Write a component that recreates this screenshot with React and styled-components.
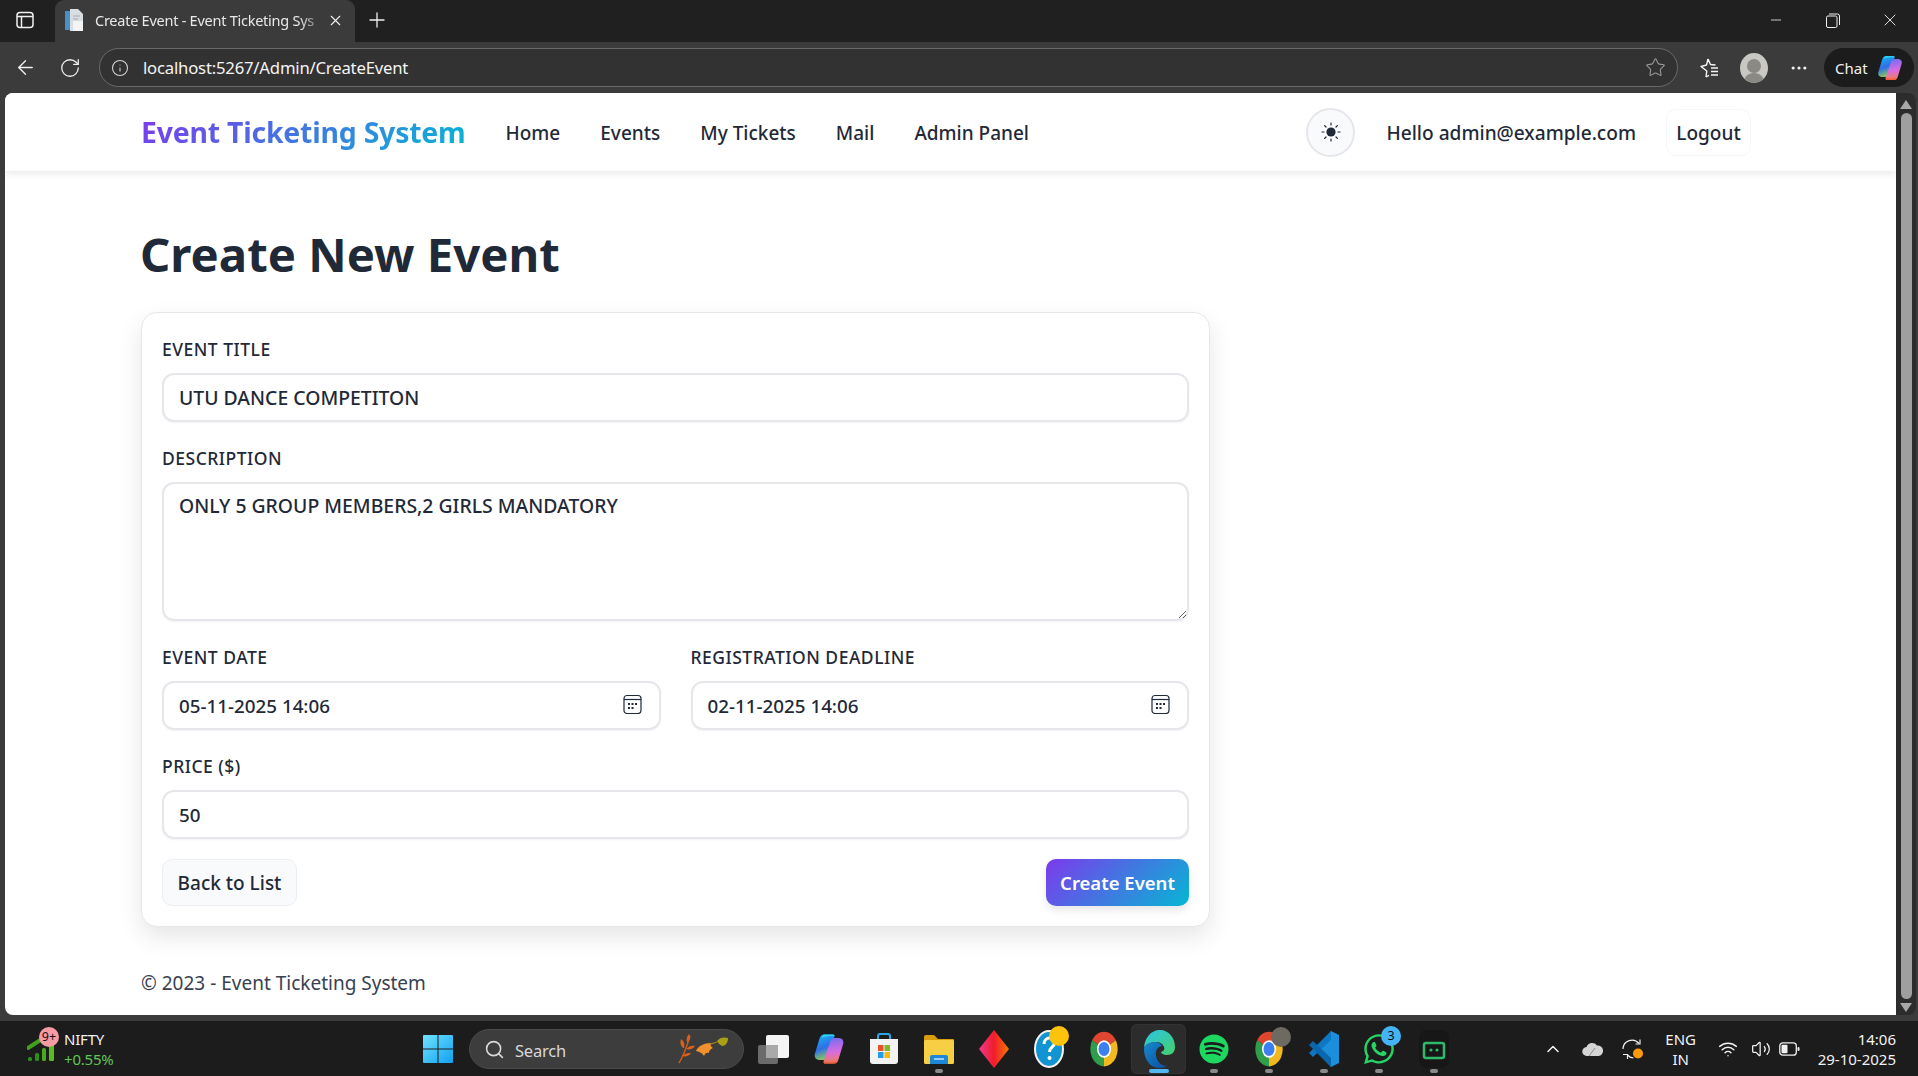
import React from "react";
import styled, { createGlobalStyle } from "styled-components";
import {
  ArrowLeft,
  RotateCw,
  Info,
  Star,
  X,
  Plus,
  Minus,
  MoreHorizontal,
  Search,
  ChevronUp,
  Wifi,
  Volume2,
} from "lucide-react";
import { FaSpotify, FaWhatsapp } from "react-icons/fa";

const GlobalStyle = createGlobalStyle`
  * { box-sizing: border-box; }
  html, body { margin: 0; padding: 0; height: 100%; overflow: hidden; }
  body { font-family: "Noto Sans", "Open Sans", sans-serif; background: #3b3b3b; }
`;

const Screen = styled.div`
  display: flex;
  flex-direction: column;
  width: 1918px;
  height: 1076px;
  overflow: hidden;
`;

/* browser chrome */
const TabStrip = styled.div`
  display: flex;
  align-items: flex-end;
  height: 42px;
  padding-left: 14px;
  background: #202020;
  color: #f0f0f0;
  flex-shrink: 0;
`;

const StripButton = styled.div`
  display: flex;
  align-items: center;
  justify-content: center;
  width: 22px;
  height: 42px;
  margin-right: 19px;
  padding-bottom: 2px;
`;

const Tab = styled.div`
  display: flex;
  align-items: center;
  width: 300px;
  height: 42px;
  padding: 0 11px 2px 9px;
  border-radius: 9px 9px 0 0;
  background: #3b3b3b;
`;

const TabTitle = styled.span`
  flex: 1;
  margin-left: 11px;
  overflow: hidden;
  font-size: 14.5px;
  white-space: nowrap;
  color: #e8e8e8;
  letter-spacing: -0.25px;
  -webkit-mask-image: linear-gradient(90deg, #000 88%, transparent);
  mask-image: linear-gradient(90deg, #000 88%, transparent);
`;

const NewTab = styled.div`
  display: flex;
  align-items: center;
  height: 42px;
  margin-left: 10px;
  padding-bottom: 2px;
`;

const WindowControls = styled.div`
  display: flex;
  align-items: center;
  height: 42px;
  margin-left: auto;
  padding-bottom: 2px;
`;

const WindowButton = styled.div`
  display: flex;
  align-items: center;
  justify-content: center;
  width: 57px;
  height: 40px;
`;

const Toolbar = styled.div`
  display: flex;
  align-items: center;
  height: 51px;
  padding: 0 4px 0 11px;
  background: #3b3b3b;
  color: #f0f0f0;
  flex-shrink: 0;
`;

const ToolButton = styled.div`
  display: flex;
  align-items: center;
  justify-content: center;
  width: ${(p) => p.$w || 45}px;
  flex-shrink: 0;
`;

const AddressBar = styled.div`
  display: flex;
  align-items: center;
  flex: 1;
  height: 39px;
  margin: 0 8px 0 -2px;
  padding: 0 11px;
  border: 1px solid #6a6a6a;
  border-radius: 20px;
  background: #323232;
`;

const Url = styled.span`
  flex: 1;
  margin-left: 14px;
  font-size: 16.7px;
  letter-spacing: -0.2px;
  color: #f4f4f4;
`;

const ChatPill = styled.div`
  display: flex;
  align-items: center;
  gap: 8px;
  width: 90px;
  height: 39px;
  margin-left: 3px;
  padding-left: 11px;
  border-radius: 20px;
  background: #1c1c1c;
  font-size: 15px;
  color: #f0f0f0;
`;

const Avatar = styled.div`
  position: relative;
  width: 28px;
  height: 30px;
  overflow: hidden;
  border-radius: 50%;
  background: #c9c7c2;
`;

const AvatarShape = styled.span`
  position: absolute;
  left: ${(p) => p.$x}px;
  top: ${(p) => p.$y}px;
  width: ${(p) => p.$s}px;
  height: ${(p) => p.$s}px;
  border-radius: 50%;
  background: #8b8985;
`;

/* viewport */
const Viewport = styled.div`
  display: flex;
  flex: 1;
  min-height: 0;
  padding-left: 5px;
`;

const Page = styled.div`
  display: flex;
  flex-direction: column;
  flex: 1;
  min-width: 0;
  overflow: hidden;
  border-radius: 8px 0 0 8px;
  background: #fff;
  color: #1f2937;
`;

const Scrollbar = styled.div`
  display: flex;
  flex-direction: column;
  align-items: center;
  width: 20px;
  margin-right: 2px;
  padding: 7px 0 3px;
  border-radius: 0 8px 8px 0;
  background: #2c2c2c;
`;

const ScrollThumb = styled.div`
  flex: 1;
  width: 11px;
  margin: 4px 0;
  border-radius: 6px;
  background: #9f9f9f;
`;

const ScrollArrow = styled.div`
  width: 0;
  height: 0;
  border-left: 6px solid transparent;
  border-right: 6px solid transparent;
  ${(p) => (p.$down ? "border-top: 9px solid #a8a8a8;" : "border-bottom: 9px solid #a8a8a8;")}
`;

const Navbar = styled.header`
  position: relative;
  display: flex;
  align-items: center;
  height: 78px;
  padding: 0 145px 0 136px;
  background: #fff;
  box-shadow: 0 2px 8px rgba(0, 0, 0, 0.1);
  flex-shrink: 0;
`;

const Brand = styled.a`
  margin-right: 40px;
  font-size: 28.4px;
  font-weight: 700;
  letter-spacing: -0.2px;
  white-space: nowrap;
  background: linear-gradient(135deg, #7c3aed, #06b6d4);
  -webkit-background-clip: text;
  background-clip: text;
  color: transparent;
`;

const NavLinks = styled.nav`
  display: flex;
  gap: 40px;
  padding-top: 2px;
`;

const NavLink = styled.a`
  font-size: 19px;
  font-weight: 500;
  color: #1f2937;
  white-space: nowrap;
`;

const NavRight = styled.div`
  display: flex;
  align-items: center;
  margin-left: auto;
`;

const ThemeButton = styled.button`
  display: flex;
  align-items: center;
  justify-content: center;
  width: 49px;
  height: 49px;
  margin-right: 31px;
  padding: 0;
  border: 2px solid #e5e7eb;
  border-radius: 50%;
  background: #f9fafb;
`;

const Hello = styled.span`
  padding-top: 2px;
  font-size: 19.1px;
  font-weight: 500;
  white-space: nowrap;
  margin-right: 30px;
`;

const LogoutButton = styled.button`
  width: 85px;
  height: 47px;
  padding: 2px 0 0;
  border: 1px solid #f6f6f8;
  border-radius: 10px;
  background: #fff;
  font: 500 19px "Noto Sans", sans-serif;
  color: #1f2937;
`;

const Main = styled.main`
  flex: 1;
  padding: 54px 0 0 136px;
`;

const Heading = styled.h1`
  margin: 0 0 29px -1px;
  font-size: 47.3px;
  line-height: 58px;
  font-weight: 700;
  color: #1f2937;
`;

const Card = styled.form`
  display: flex;
  flex-direction: column;
  gap: 25px;
  width: 1069px;
  padding: 25px 20px 20px;
  border: 1px solid #e5e7eb;
  border-radius: 16px;
  background: #fff;
  box-shadow: 0 10px 25px rgba(0, 0, 0, 0.1);
`;

const Group = styled.div`
  display: flex;
  flex-direction: column;
`;

const Label = styled.label`
  margin-bottom: 13px;
  font-size: 17.5px;
  line-height: 22px;
  font-weight: 500;
  letter-spacing: 0.5px;
  text-transform: uppercase;
  color: #1f2937;
`;

const InputWrap = styled.div`
  position: relative;
`;

const Input = styled.input`
  display: block;
  width: 100%;
  height: 49px;
  padding: 0 15px;
  border: 2px solid #e5e7eb;
  border-radius: 12px;
  outline: none;
  background: #fff;
  box-shadow: 0 1px 2px rgba(0, 0, 0, 0.05);
  font: 500 ${(p) => (p.$numeric ? 18.8 : 19.4)}px "Noto Sans", sans-serif;
  color: #1f2937;
`;

const TextArea = styled.textarea`
  display: block;
  width: 100%;
  height: 139px;
  padding: 9px 15px;
  border: 2px solid #e5e7eb;
  border-radius: 12px;
  outline: none;
  background: #fff;
  box-shadow: 0 1px 2px rgba(0, 0, 0, 0.05);
  font: 500 19.4px/26px "Noto Sans", sans-serif;
  color: #1f2937;
`;

const CalendarSlot = styled.span`
  position: absolute;
  top: 13px;
  right: 19px;
  display: flex;
  color: #1f2937;
`;

const DateRow = styled.div`
  display: grid;
  grid-template-columns: 1fr 1fr;
  gap: 30px;
`;

const Actions = styled.div`
  display: flex;
  justify-content: space-between;
  margin-top: -5px;
`;

const BackButton = styled.button`
  width: 135px;
  height: 47px;
  padding: 0;
  border: 1px solid #eceef1;
  border-radius: 10px;
  background: #f9fafb;
  font: 500 19px "Noto Sans", sans-serif;
  color: #1f2937;
`;

const SubmitButton = styled.button`
  width: 143px;
  height: 47px;
  padding: 0;
  border: none;
  border-radius: 10px;
  background: linear-gradient(135deg, #7c3aed, #06b6d4);
  box-shadow: 0 4px 8px rgba(0, 0, 0, 0.1);
  font: 600 18.5px "Noto Sans", sans-serif;
  color: #fff;
`;

const Footer = styled.footer`
  margin-top: 43px;
  font-size: 19px;
  line-height: 26px;
  color: #374151;
`;

/* taskbar */
const Taskbar = styled.div`
  display: flex;
  align-items: center;
  height: 55px;
  margin-top: 6px;
  background: #1c1c1c;
  color: #f2f2f2;
  flex-shrink: 0;
`;

const Weather = styled.div`
  position: relative;
  display: flex;
  align-items: center;
  gap: 9px;
  width: 423px;
  padding-left: 27px;
  flex-shrink: 0;
`;

const Badge = styled.span`
  position: absolute;
  display: flex;
  align-items: center;
  justify-content: center;
  left: ${(p) => p.$x}px;
  top: ${(p) => p.$y}px;
  width: ${(p) => p.$s || 20}px;
  height: ${(p) => p.$s || 20}px;
  border-radius: 50%;
  background: ${(p) => p.$bg};
  color: ${(p) => p.$fg || "#111"};
  font-size: 12.5px;
`;

const Ticker = styled.div`
  display: flex;
  flex-direction: column;
  font-size: 15px;
  line-height: 20px;
  letter-spacing: -0.2px;
`;

const TickerValue = styled.span`
  color: #62c554;
`;

const StartButton = styled.div`
  display: flex;
  width: 46px;
  flex-shrink: 0;
`;

const SearchBox = styled.div`
  display: flex;
  align-items: center;
  width: 275px;
  height: 40px;
  padding: 1px 6px 0 14px;
  border: 1px solid #4a4a4a;
  border-radius: 20px;
  background: #3d3d3d;
  flex-shrink: 0;
  color: #d8d8d8;
`;

const SearchText = styled.span`
  flex: 1;
  margin-left: 10px;
  padding-top: 2px;
  font-size: 16.5px;
  letter-spacing: -0.2px;
`;

const TaskIcons = styled.div`
  display: flex;
  margin-left: 2px;
  flex-shrink: 0;
`;

const TaskItem = styled.div`
  position: relative;
  display: flex;
  align-items: center;
  justify-content: center;
  width: 55px;
  height: 50px;
  border-radius: 6px;
  ${(p) => p.$active && "background: #2c2c2c; box-shadow: inset 0 0 0 1px #333;"}
  &::after {
    content: "";
    display: ${(p) => (p.$dot || p.$active ? "block" : "none")};
    position: absolute;
    bottom: 1px;
    left: 50%;
    width: ${(p) => (p.$active ? 20 : 8)}px;
    height: 4px;
    margin-left: ${(p) => (p.$active ? -10 : -4)}px;
    border-radius: 2px;
    background: ${(p) => (p.$active ? "#4fb8f0" : "#8a8a8a")};
  }
`;

const Tray = styled.div`
  display: flex;
  align-items: center;
  margin-left: auto;
  padding-right: 22px;
`;

const TraySlot = styled.div`
  display: flex;
  align-items: center;
  justify-content: center;
  width: ${(p) => p.$w}px;
  height: 40px;
`;

const LangText = styled.div`
  font-size: 15px;
  line-height: 20px;
  text-align: center;
`;

const ClockText = styled.div`
  margin-left: 13px;
  font-size: 15px;
  line-height: 20px;
  text-align: right;
  white-space: nowrap;
`;

/* drawn icons */
const TabsIcon = () => (
  <svg width="18" height="18" viewBox="0 0 18 18" fill="none" stroke="#f0f0f0" strokeWidth="1.5">
    <rect x="1" y="1.5" width="16" height="15" rx="3" />
    <path d="M1 5.5h16M5.5 5.5v11" />
  </svg>
);

const PageIcon = () => (
  <svg width="20" height="24" viewBox="0 0 20 24">
    <path d="M1 3h6v19H1z" fill="#4b8fc9" />
    <path d="M6 1h8l5 5v17H6z" fill="#d8dde2" />
    <path d="M9 13h10v10H9z" fill="#f2f4f6" />
    <path d="M9 8h7M9 11h5" stroke="#a4abb3" />
  </svg>
);

const RestoreIcon = () => (
  <svg width="14" height="15" viewBox="0 0 14 15" fill="none" stroke="#f0f0f0" strokeWidth="1">
    <rect x="0.5" y="3" width="10.5" height="11.5" rx="1.5" />
    <path d="M3 1h8.5A2 2 0 0 1 13.5 3v9" />
  </svg>
);

const FavoritesIcon = () => (
  <svg width="22" height="22" viewBox="0 0 22 22" fill="none" stroke="#f4f4f4" strokeWidth="1.4" strokeLinejoin="round">
    <path d="M10 2l2.5 5.5 5 .5M8 20l.8-6L3 9.5l5.5-1.5L10 2M8 20l3-1.6" />
    <path d="M13 11h7M13 14.5h7M13 18h7" />
  </svg>
);

const CopilotIcon = ({ size = 28, id = "cp" }) => (
  <svg width={size} height={size} viewBox="0 0 28 28">
    <defs>
      <linearGradient id={`${id}A`} x1="0.2" y1="0" x2="0.5" y2="1">
        <stop offset="0" stopColor="#19b4f5" />
        <stop offset="0.55" stopColor="#2f6fe8" />
        <stop offset="1" stopColor="#8fd14f" />
      </linearGradient>
      <linearGradient id={`${id}B`} x1="0.5" y1="0" x2="0.6" y2="1">
        <stop offset="0" stopColor="#7c6cf2" />
        <stop offset="0.55" stopColor="#d96ce0" />
        <stop offset="1" stopColor="#f0804f" />
      </linearGradient>
    </defs>
    <path d="M10 2h7c1.200 0 1.800 1 1.400 2.200L13 20c-.7 2-2 3-4 3H6c-3 0-4.400-2.400-3.600-5L6 6c.7-2.500 2-4 4-4z" fill={`url(#${id}A)`} />
    <path d="M18 26h-7c-1.200 0-1.800-1-1.400-2.200L15 8c.7-2 2-3 4-3h3c3 0 4.400 2.400 3.600 5L22 22c-.7 2.500-2 4-4 4z" fill={`url(#${id}B)`} />
    <path d="M9.800 24c-.3 1 .2 2 1.200 2h7c1.500 0 2.700-.8 3.400-2.200-3 .8-7 .8-11.600.2z" fill="#f2603f" />
    <path d="M10 2h7.500c.8 0 1.200.6 1 1.400C15 3 12 3.500 8 4.800 8.500 3 9 2 10 2z" fill="#2bd0f2" />
  </svg>
);

const SunIcon = () => (
  <svg width="20" height="20" viewBox="0 0 20 20" fill="#1f2937" stroke="#1f2937" strokeWidth="1.2" strokeLinecap="round">
    <circle cx="10" cy="10" r="4.600" stroke="none" />
    <path d="M10 1v2M10 17v2M1 10h2M17 10h2M3.600 3.600l1.400 1.400M15 15l1.400 1.400M3.600 16.400L5 15M15 5l1.400-1.400" />
  </svg>
);

const CalendarIcon = () => (
  <svg width="19" height="20" viewBox="0 0 19 20" fill="none" stroke="currentColor" strokeWidth="1.200">
    <rect x="1" y="1.500" width="17" height="18" rx="3" />
    <path d="M1 5.500h17" />
    <g fill="currentColor" stroke="none">
      <rect x="5" y="9" width="2" height="2" />
      <rect x="8.500" y="9" width="2" height="2" />
      <rect x="12" y="9" width="2" height="2" />
      <rect x="5" y="13" width="2" height="2" />
      <rect x="8.500" y="13" width="2" height="2" />
    </g>
  </svg>
);

const NiftyIcon = () => (
  <svg width="28" height="27" viewBox="0 0 28 27">
    <path d="M1 13L15 4" stroke="#3da31f" strokeWidth="4" strokeLinecap="round" />
    <rect x="1" y="22" width="4" height="4" rx="1.500" fill="#2a8f14" />
    <rect x="8" y="18" width="4" height="8" rx="1.500" fill="#2a8f14" />
    <rect x="15" y="13" width="4" height="13" rx="1.500" fill="#49a81f" />
    <rect x="22" y="8" width="5" height="18" rx="1.500" fill="#59bd22" />
  </svg>
);

const WindowsLogo = () => (
  <svg width="30" height="30" viewBox="0 0 30 30">
    <defs>
      <linearGradient id="winA" x1="0" y1="0" x2="1" y2="1">
        <stop offset="0" stopColor="#6fe3ff" />
        <stop offset="1" stopColor="#12a0f0" />
      </linearGradient>
    </defs>
    <path d="M1 1h13.500v13.500H0V2a1 1 0 0 1 1-1zM15.500 1H29a1 1 0 0 1 1 1v12.500H15.500zM0 15.500h14.500V29H1a1 1 0 0 1-1-1zM15.500 15.500H30V28a1 1 0 0 1-1 1H15.500z" fill="url(#winA)" />
  </svg>
);

const LeavesIcon = () => (
  <svg width="60" height="30" viewBox="0 0 60 30">
    <path d="M2 29C7 21 10 12 13 2" stroke="#c65a1c" strokeWidth="1.500" fill="none" />
    <path d="M6 14c-3-3-3-6-2-9 3 2 4 5 3 9zM10 8c-1-3 0-6 2-8 2 3 1 6-1 8zM9 15c3-3 6-4 9-3-2 3-5 4-9 3zM5 22c3-3 6-3 9-3-2 3-5 4-9 3z" fill="#dd5f1a" />
    <path d="M19 17c2-5 8-8 15-8-1 2 0 4 2 5-3 1-4 3-4 5-2-1-4 0-5 3-2-3-4-4-8-5z" fill="#f0902e" />
    <path d="M34 10l6-2" stroke="#a88a10" strokeWidth="1.200" />
    <path d="M40 7c3-4 7-4 11-3 0 4-2 8-6 8-2-1-4-3-5-5z" fill="#a9a016" />
  </svg>
);

const SquaresIcon = () => (
  <svg width="32" height="30" viewBox="0 0 32 30">
    <rect x="0" y="11" width="20" height="19" rx="2" fill="#6b6b6b" />
    <rect x="8" y="1" width="23" height="23" rx="2" fill="#f4f4f4" />
    <rect x="8" y="11" width="12" height="13" fill="#a9a9a9" />
  </svg>
);

const StoreIcon = () => (
  <svg width="30" height="32" viewBox="0 0 30 32">
    <path d="M9 7V3a2 2 0 0 1 2-2h8a2 2 0 0 1 2 2v4" fill="none" stroke="#29a8e8" strokeWidth="2" />
    <path d="M1 6h28v22a3 3 0 0 1-3 3H4a3 3 0 0 1-3-3z" fill="#f3f3f3" />
    <rect x="9" y="12" width="5.500" height="6" fill="#e8502a" />
    <rect x="15.500" y="12" width="5.500" height="6" fill="#7db928" />
    <rect x="9" y="19" width="5.500" height="6" fill="#1e9ee8" />
    <rect x="15.500" y="19" width="5.500" height="6" fill="#f6b911" />
  </svg>
);

const FolderIcon = () => (
  <svg width="32" height="30" viewBox="0 0 32 30">
    <path d="M1 3a2 2 0 0 1 2-2h8l4 4h15a1 1 0 0 1 1 1v5H1z" fill="#d99e0d" />
    <rect x="1" y="6" width="30" height="24" rx="1.500" fill="#f7cf45" />
    <path d="M7 30v-7a2 2 0 0 1 2-2h14a2 2 0 0 1 2 2v7z" fill="#1e87d8" />
    <rect x="11" y="24" width="10" height="2" fill="#8fd0f4" />
  </svg>
);

const DiamondIcon = () => (
  <svg width="30" height="38" viewBox="0 0 30 38">
    <defs>
      <linearGradient id="dmA" x1="0" y1="0" x2="1" y2="0">
        <stop offset="0" stopColor="#f0398c" />
        <stop offset="0.5" stopColor="#f01c2c" />
        <stop offset="1" stopColor="#f77a00" />
      </linearGradient>
    </defs>
    <path d="M15 0l15 19-15 19L0 19z" fill="url(#dmA)" />
  </svg>
);

const HelpIcon = () => (
  <svg width="30" height="38" viewBox="0 0 30 38">
    <ellipse cx="15" cy="19" rx="14" ry="18" fill="#1394d2" stroke="#f4f4f4" strokeWidth="2" />
    <path d="M10 14c0-4 3-6 5.500-6 3 0 5 2 5 5 0 4-5 4-5 9" fill="none" stroke="#fff" strokeWidth="3" />
    <circle cx="15.500" cy="28" r="2" fill="#fff" />
  </svg>
);

const ChromeIcon = ({ w = 30, h = 38 }) => (
  <svg width={w} height={h} viewBox="0 0 24 24" preserveAspectRatio="none">
    <path d="M12 12L2.500 6.500A11 11 0 0 1 21.500 6.500z" fill="#e0452f" />
    <path d="M12 12L21.500 6.500A11 11 0 0 1 12 23z" fill="#f2b91e" />
    <path d="M12 12L12 23A11 11 0 0 1 2.500 6.500z" fill="#2f9e4a" />
    <circle cx="12" cy="12" r="5.600" fill="#fff" />
    <circle cx="12" cy="12" r="4.400" fill="#3c7ff0" />
  </svg>
);

const EdgeIcon = () => (
  <svg width="32" height="38" viewBox="0 0 32 38">
    <defs>
      <linearGradient id="edA" x1="0" y1="0" x2="1" y2="1">
        <stop offset="0" stopColor="#2cc4e8" />
        <stop offset="1" stopColor="#45d06a" />
      </linearGradient>
      <linearGradient id="edB" x1="0" y1="0" x2="1" y2="1">
        <stop offset="0" stopColor="#1789d0" />
        <stop offset="1" stopColor="#0c4f9c" />
      </linearGradient>
    </defs>
    <path d="M1 19C1 8 8 0 17 0c9 0 15 8 15 17 0 5-3 8-8 8-4 0-6-2-6-3 3-1 4-3 3-5-1-3-4-5-8-5-6 0-12 3-12 7z" fill="url(#edA)" />
    <path d="M1 19c0-4 6-7 11-7 4 0 6 2 7 4-5 1-7 5-6 10 1 5 5 10 11 10-2 1-5 2-8 2C7 38 1 29 1 19z" fill="url(#edB)" />
  </svg>
);

const VsCodeIcon = () => (
  <svg width="30" height="36" viewBox="0 0 30 36">
    <path d="M22 0l8 4v28l-8 4-13-14.500z" fill="#1b8fdc" />
    <path d="M22 0L0 22l4 4L22 9z" fill="#0f78c4" />
    <path d="M22 36L0 14l4-4 18 17z" fill="#0a67ae" />
  </svg>
);

const RemoteIcon = () => (
  <svg width="30" height="38" viewBox="0 0 30 38">
    <rect x="0" y="0" width="30" height="38" rx="8" fill="#171717" />
    <rect x="5" y="13" width="20" height="15" rx="2" fill="none" stroke="#2dbb6b" strokeWidth="2.500" />
    <circle cx="12" cy="20" r="1.600" fill="#2dbb6b" />
    <circle cx="18" cy="20" r="1.600" fill="#2dbb6b" />
  </svg>
);

const CloudIcon = () => (
  <svg width="21" height="14" viewBox="0 0 21 14">
    <path d="M5 14a4.500 4.500 0 0 1-.5-9A6 6 0 0 1 15 3.500 5 5 0 0 1 16.500 14z" fill="#d4d4d4" />
    <path d="M7 14l6-8" stroke="#8c8c8c" strokeWidth="1" />
  </svg>
);

const SyncIcon = () => (
  <svg width="22" height="22" viewBox="0 0 22 22" fill="none" stroke="#f0f0f0" strokeWidth="1.200">
    <path d="M1 11a9 9 0 0 1 16-5.500" />
    <path d="M18 1.500v4.500h-4.500" />
    <path d="M1 16.500h4.500V21" />
    <path d="M5.500 17a9 9 0 0 0 6 3" />
    <circle cx="16" cy="15.500" r="5" fill="#f89a0c" stroke="none" />
  </svg>
);

const BatteryIcon = () => (
  <svg width="21" height="14" viewBox="0 0 21 14">
    <rect x="0.800" y="0.800" width="16.500" height="12.400" rx="3" fill="none" stroke="#f0f0f0" strokeWidth="1.300" />
    <rect x="2.500" y="2.800" width="6" height="8.400" rx="1" fill="#f0f0f0" />
    <rect x="18.500" y="5" width="2" height="4" rx="1" fill="#f0f0f0" />
  </svg>
);

const taskIcons = [
  { id: "squares", icon: <SquaresIcon /> },
  { id: "copilot", icon: <CopilotIcon size={34} id="cpTask" /> },
  { id: "store", icon: <StoreIcon /> },
  { id: "folder", icon: <FolderIcon />, dot: true },
  { id: "diamond", icon: <DiamondIcon /> },
  { id: "help", icon: <HelpIcon />, badge: { x: 28, y: 2, s: 20, bg: "#fdc30a" } },
  { id: "chrome", icon: <ChromeIcon /> },
  { id: "edge", icon: <EdgeIcon />, active: true },
  { id: "spotify", icon: <FaSpotify size={30} color="#1ed760" />, dot: true },
  { id: "chrome2", icon: <ChromeIcon />, dot: true, badge: { x: 30, y: 3, s: 20, bg: "#6d6a62" } },
  { id: "vscode", icon: <VsCodeIcon />, dot: true },
  { id: "whatsapp", icon: <FaWhatsapp size={34} color="#25d366" />, dot: true, badge: { x: 30, y: 2, s: 20, bg: "#45b4f5", label: "3" } },
  { id: "remote", icon: <RemoteIcon />, dot: true },
];

const App = () => {
  return (
    <Screen>
      <GlobalStyle />
      <TabStrip>
        <StripButton>
          <TabsIcon />
        </StripButton>
        <Tab>
          <PageIcon />
          <TabTitle>Create Event - Event Ticketing Sys</TabTitle>
          <X size={17} strokeWidth={1.6} />
        </Tab>
        <NewTab>
          <Plus size={24} strokeWidth={1.3} />
        </NewTab>
        <WindowControls>
          <WindowButton>
            <Minus size={16} strokeWidth={1.2} />
          </WindowButton>
          <WindowButton>
            <RestoreIcon />
          </WindowButton>
          <WindowButton>
            <X size={20} strokeWidth={1.1} />
          </WindowButton>
        </WindowControls>
      </TabStrip>
      <Toolbar>
        <ToolButton $w={28}>
          <ArrowLeft size={23} strokeWidth={1.4} />
        </ToolButton>
        <ToolButton $w={62}>
          <RotateCw size={22} strokeWidth={1.4} />
        </ToolButton>
        <AddressBar>
          <Info size={18} strokeWidth={1.4} color="#d8d8d8" />
          <Url>localhost:5267/Admin/CreateEvent</Url>
          <Star size={21} strokeWidth={1.2} color="#9a9a9a" />
        </AddressBar>
        <ToolButton $w={45}>
          <FavoritesIcon />
        </ToolButton>
        <ToolButton $w={45}>
          <Avatar>
            <AvatarShape $x={7} $y={6} $s={14} />
            <AvatarShape $x={3} $y={20} $s={22} />
          </Avatar>
        </ToolButton>
        <ToolButton $w={45}>
          <MoreHorizontal size={20} strokeWidth={1.8} />
        </ToolButton>
        <ChatPill>
          Chat
          <CopilotIcon />
        </ChatPill>
      </Toolbar>
      <Viewport>
        <Page>
          <Navbar>
            <Brand>Event Ticketing System</Brand>
            <NavLinks>
              <NavLink>Home</NavLink>
              <NavLink>Events</NavLink>
              <NavLink>My Tickets</NavLink>
              <NavLink>Mail</NavLink>
              <NavLink>Admin Panel</NavLink>
            </NavLinks>
            <NavRight>
              <ThemeButton type="button" aria-label="Toggle theme">
                <SunIcon />
              </ThemeButton>
              <Hello>Hello admin@example.com</Hello>
              <LogoutButton type="button">Logout</LogoutButton>
            </NavRight>
          </Navbar>
          <Main>
            <Heading>Create New Event</Heading>
            <Card>
              <Group>
                <Label>Event Title</Label>
                <Input readOnly value="UTU DANCE COMPETITON" />
              </Group>
              <Group>
                <Label>Description</Label>
                <TextArea readOnly value="ONLY 5 GROUP MEMBERS,2 GIRLS MANDATORY" />
              </Group>
              <DateRow>
                <Group>
                  <Label>Event Date</Label>
                  <InputWrap>
                    <Input $numeric readOnly value="05-11-2025 14:06" />
                    <CalendarSlot>
                      <CalendarIcon />
                    </CalendarSlot>
                  </InputWrap>
                </Group>
                <Group>
                  <Label>Registration Deadline</Label>
                  <InputWrap>
                    <Input $numeric readOnly value="02-11-2025 14:06" />
                    <CalendarSlot>
                      <CalendarIcon />
                    </CalendarSlot>
                  </InputWrap>
                </Group>
              </DateRow>
              <Group>
                <Label>Price ($)</Label>
                <Input $numeric readOnly value="50" />
              </Group>
              <Actions>
                <BackButton type="button">Back to List</BackButton>
                <SubmitButton type="button">Create Event</SubmitButton>
              </Actions>
            </Card>
            <Footer>© 2023 - Event Ticketing System</Footer>
          </Main>
        </Page>
        <Scrollbar>
          <ScrollArrow />
          <ScrollThumb />
          <ScrollArrow $down />
        </Scrollbar>
      </Viewport>
      <Taskbar>
        <Weather>
          <NiftyIcon />
          <Badge $x={39} $y={-2} $bg="#f79aa4">9+</Badge>
          <Ticker>
            <span>NIFTY</span>
            <TickerValue>+0.55%</TickerValue>
          </Ticker>
        </Weather>
        <StartButton>
          <WindowsLogo />
        </StartButton>
        <SearchBox>
          <Search size={21} strokeWidth={1.8} />
          <SearchText>Search</SearchText>
          <LeavesIcon />
        </SearchBox>
        <TaskIcons>
          {taskIcons.map((item) => (
            <TaskItem key={item.id} $active={item.active} $dot={item.dot}>
              {item.icon}
              {item.badge && (
                <Badge $x={item.badge.x} $y={item.badge.y} $s={item.badge.s} $bg={item.badge.bg}>
                  {item.badge.label}
                </Badge>
              )}
            </TaskItem>
          ))}
        </TaskIcons>
        <Tray>
          <TraySlot $w={40}>
            <ChevronUp size={20} strokeWidth={1.8} />
          </TraySlot>
          <TraySlot $w={40}>
            <CloudIcon />
          </TraySlot>
          <TraySlot $w={40}>
            <SyncIcon />
          </TraySlot>
          <TraySlot $w={56}>
            <LangText>
              ENG
              <br />
              IN
            </LangText>
          </TraySlot>
          <TraySlot $w={38}>
            <Wifi size={20} strokeWidth={1.8} />
          </TraySlot>
          <TraySlot $w={28}>
            <Volume2 size={20} strokeWidth={1.5} />
          </TraySlot>
          <TraySlot $w={30}>
            <BatteryIcon />
          </TraySlot>
          <ClockText>
            14:06
            <br />
            29-10-2025
          </ClockText>
        </Tray>
      </Taskbar>
    </Screen>
  );
};

export default App;
